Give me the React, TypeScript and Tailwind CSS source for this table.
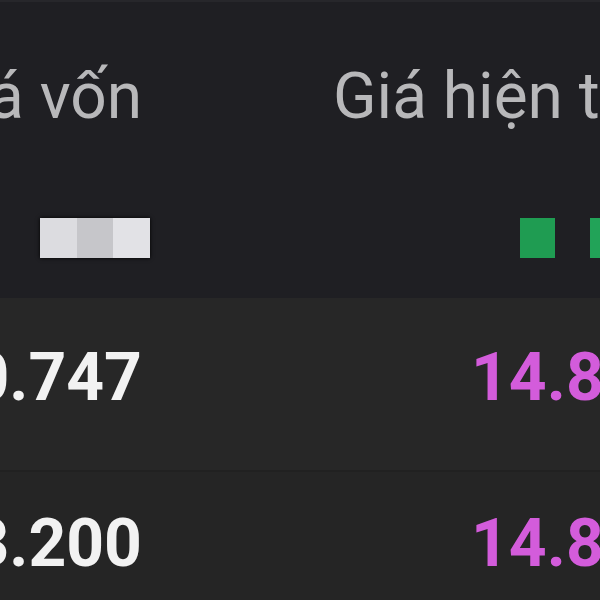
export default function App() {
  const rows = [
    { cost: "80.747", price: "14.850" },
    { cost: "13.200", price: "14.850" },
  ];

  return (
    <div className="w-[600px] h-[600px] overflow-hidden bg-[#252525] font-['Roboto',sans-serif]">
      <div className="-ml-[160px] w-[900px]">
        {/* header + sub row */}
        <div className="bg-[#1f1f23] border-t-2 border-[#27272b]">
          <div className="grid grid-cols-[302px_400px] gap-x-[191px] pt-[63px]">
            <div className="text-right text-[64px] leading-[64px] text-[#b8b8ba] whitespace-nowrap">Giá vốn</div>
            <div className="text-[64px] leading-[64px] text-[#b8b8ba] whitespace-nowrap">Giá hiện tại</div>
          </div>
          <div className="grid grid-cols-[302px_400px] gap-x-[191px] pt-[89px] pb-[40px]">
            <div className="flex justify-end -mr-[8px]">
              <div className="flex h-[40px] w-[110px] shadow-[0_0_4px_#000]">
                <div className="flex-1 bg-[#dcdce0]" />
                <div className="flex-1 bg-[#c6c6ca]" />
                <div className="flex-1 bg-[#e2e2e6]" />
              </div>
            </div>
            <div className="flex gap-[35px] pl-[187px]">
              <div className="h-[40px] w-[35px] bg-[#1f9c52]" />
              <div className="h-[40px] w-[35px] bg-[#22a358]" />
            </div>
          </div>
        </div>

        {rows.map((r, i) => (
          <div
            key={i}
            className={`grid grid-cols-[302px_400px] gap-x-[191px] ${
              i === 0 ? "pt-[47px] pb-[59px] bg-[#272727]" : "pt-[39px] pb-[40px] bg-[#252525] border-t-2 border-[#212121]"
            }`}
          >
            <div className="text-right text-[66px] leading-[66px] font-bold text-[#f2f2f2] whitespace-nowrap">{r.cost}</div>
            <div className="pl-[138px] text-[66px] leading-[66px] font-bold text-[#d35cdb] whitespace-nowrap">{r.price}</div>
          </div>
        ))}
      </div>
    </div>
  );
}
